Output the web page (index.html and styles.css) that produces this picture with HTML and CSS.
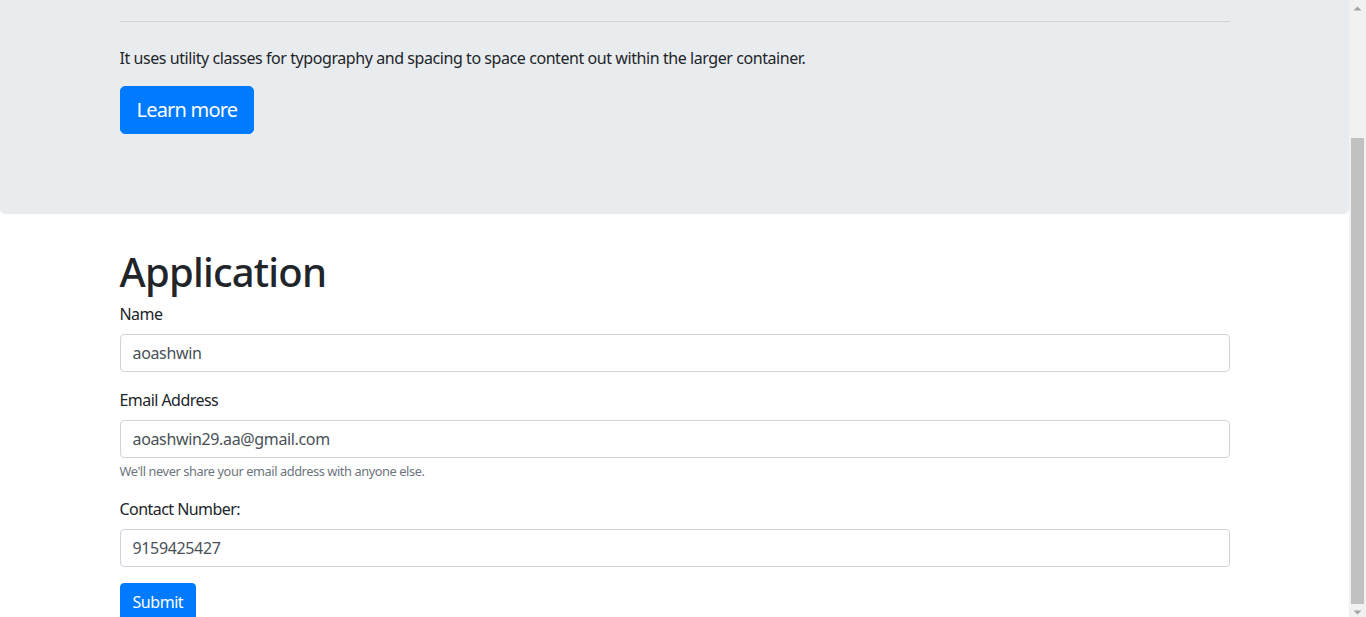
FILE: index.html
```html
<!DOCTYPE html>
<html lang="en">
<head>
<meta charset="utf-8">
<title>Application</title>
<link rel="stylesheet" href="styles.css">
</head>
<body>
<div class="page">
  <div class="jumbotron">
    <div class="container">
      <hr class="divider">
      <p class="text">It uses utility classes for typography and spacing to space content out within the larger container.</p>
      <div class="lead"><a class="btn btn-lg" href="#">Learn more</a></div>
    </div>
  </div>
  <div class="container">
    <h1 class="title">Application</h1>
    <form class="form">
      <div class="form-group">
        <label class="label" for="name">Name</label>
        <input class="input" id="name" type="text" value="aoashwin">
      </div>
      <div class="form-group">
        <label class="label" for="email">Email Address</label>
        <input class="input" id="email" type="email" value="aoashwin29.aa@gmail.com">
        <small class="help">We'll never share your email address with anyone else.</small>
      </div>
      <div class="form-group">
        <label class="label" for="phone">Contact Number:</label>
        <input class="input" id="phone" type="text" value="9159425427">
      </div>
      <button class="btn" type="button">Submit</button>
    </form>
  </div>
</div>
<div class="scrollbar">
  <div class="arrow"><svg width="17" height="17" viewBox="0 0 17 17"><path d="M4.5 10.5 L8.5 6.5 L12.5 10.5 Z" fill="#a3a3a3"/></svg></div>
  <div class="track"><div class="thumb"></div></div>
  <div class="arrow"><svg width="17" height="17" viewBox="0 0 17 17"><path d="M4.5 6.5 L8.5 10.5 L12.5 6.5 Z" fill="#a3a3a3"/></svg></div>
</div>
</body>
</html>
```
FILE: styles.css
```css
* { box-sizing: border-box; }
html, body { margin: 0; padding: 0; }
body {
  display: flex;
  height: 617px;
  overflow: hidden;
  background: #fff;
  color: #212529;
  font-family: "Noto Sans", "Open Sans", sans-serif;
  font-size: 16px;
  line-height: 24px;
}
.page {
  flex: 1;
  min-width: 0;
}
.container {
  width: 1140px;
  margin: 0 auto;
  padding: 0 15px;
}
.jumbotron {
  background: #e9ecef;
  padding: 21px 0 64px;
  margin-bottom: 32px;
  border-radius: 0 0 5px 5px;
}
.divider {
  margin: 0 0 24px;
  border: 0;
  border-top: 1px solid rgba(0,0,0,.1);
  height: 0;
}
.text {
  margin: 0 0 16px;
  letter-spacing: -0.43px;
}
.lead {
  margin-bottom: 16px;
  height: 48px;
}
.btn {
  display: inline-block;
  background: #007bff;
  color: #fff;
  border: 1px solid #007bff;
  border-radius: 4px;
  padding: 6px 12px;
  font-family: inherit;
  font-size: 16px;
  line-height: 24px;
  text-decoration: none;
  letter-spacing: -0.45px;
}
.btn-lg {
  padding: 8px 16px;
  font-size: 20px;
  line-height: 30px;
  border-radius: 5px;
  letter-spacing: -0.8px;
}
.title {
  margin: 0 0 8px;
  padding-top: 2px;
  height: 48px;
  font-size: 40px;
  line-height: 48px;
  font-weight: 500;
  letter-spacing: -0.8px;
}
.form-group {
  margin-bottom: 16px;
}
.label {
  display: inline-block;
  margin-bottom: 8px;
  letter-spacing: -0.55px;
}
.input {
  display: block;
  width: 100%;
  height: 38px;
  padding: 6px 12px;
  font-family: inherit;
  font-size: 16px;
  line-height: 24px;
  color: #495057;
  background: #fff;
  border: 1px solid #ced4da;
  border-radius: 4px;
  letter-spacing: -0.35px;
}
.help {
  display: block;
  margin-top: 4px;
  font-size: 12.8px;
  line-height: 19px;
  color: #6c757d;
  letter-spacing: -0.42px;
}
.scrollbar {
  width: 17px;
  flex: 0 0 17px;
  background: #f1f1f1;
  display: flex;
  flex-direction: column;
}
.arrow {
  height: 17px;
  flex: 0 0 17px;
}
.arrow svg { display: block; }
.track {
  flex: 1;
  padding: 121px 2px 0;
}
.thumb {
  height: 466px;
  background: #c1c1c1;
}
```
